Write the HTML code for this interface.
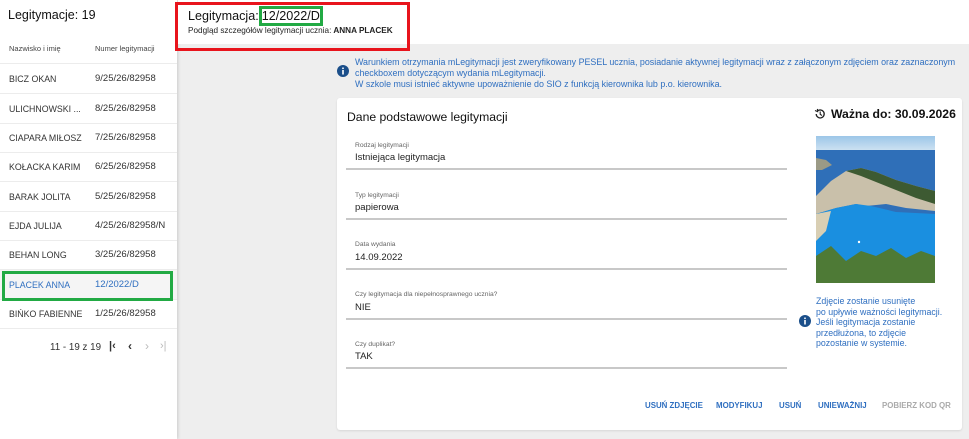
<!DOCTYPE html>
<html><head><meta charset="utf-8"><style>
*{margin:0;padding:0;box-sizing:border-box}
body{width:969px;height:439px;overflow:hidden;background:#eeeeee;font-family:"Liberation Sans",Arial,sans-serif;position:relative;color:#222}
.a{position:absolute;white-space:nowrap}
#left{position:absolute;left:0;top:0;width:177px;height:439px;background:#fff;box-shadow:1px 0 3px rgba(0,0,0,.15)}
.row{position:absolute;left:0;width:177px;height:30px;border-bottom:1px solid #ececec;font-size:8.8px;color:#333}
.row span{position:absolute;top:9px;line-height:12px}
.row span+span{font-size:9.5px}
.lbl{font-size:6.7px;color:#666}
.val{font-size:9.5px;color:#222}
.ul{position:absolute;left:346px;width:441px;height:2px;background:#c8c8c8}
.btn{position:absolute;top:401px;font-size:7.9px;font-weight:bold;color:#2f6fc0}
</style></head><body>
<div id="left">
<div class="a" style="left:8px;top:8px;font-size:12.5px;color:#111">Legitymacje: 19</div>
<div class="a" style="left:9px;top:44px;font-size:7.5px;color:#444">Nazwisko i imię</div>
<div class="a" style="left:95px;top:44px;font-size:7.5px;color:#444">Numer legitymacji</div>
<div class="row" style="top:34px;height:30px"></div>
<div class="row" style="top:64px"><span style="left:9px">BICZ OKAN</span><span style="left:95px">9/25/26/82958</span></div>
<div class="row" style="top:94px"><span style="left:9px">ULICHNOWSKI ...</span><span style="left:95px">8/25/26/82958</span></div>
<div class="row" style="top:123px"><span style="left:9px">CIAPARA MIŁOSZ</span><span style="left:95px">7/25/26/82958</span></div>
<div class="row" style="top:152px"><span style="left:9px">KOŁACKA KARIM</span><span style="left:95px">6/25/26/82958</span></div>
<div class="row" style="top:182px"><span style="left:9px">BARAK JOLITA</span><span style="left:95px">5/25/26/82958</span></div>
<div class="row" style="top:211px"><span style="left:9px">EJDA JULIJA</span><span style="left:95px">4/25/26/82958/N</span></div>
<div class="row" style="top:240px"><span style="left:9px">BEHAN LONG</span><span style="left:95px">3/25/26/82958</span></div>
<div class="row" style="top:270px;background:#f5f5f5;color:#2f6fc0"><span style="left:9px">PLACEK ANNA</span><span style="left:95px">12/2022/D</span></div>
<div class="row" style="top:299px"><span style="left:9px">BIŃKO FABIENNE</span><span style="left:95px">1/25/26/82958</span></div>
<div class="a" style="left:50px;top:342px;font-size:9.8px;color:#333">11 - 19 z 19</div>
<div class="a" style="left:109px;top:340px;font-size:11px;color:#333;font-weight:bold">|&lsaquo;</div>
<div class="a" style="left:128px;top:339px;font-size:12px;color:#333;font-weight:bold">&lsaquo;</div>
<div class="a" style="left:145px;top:339px;font-size:12px;color:#bbb">&rsaquo;</div>
<div class="a" style="left:160px;top:340px;font-size:11px;color:#bbb">&rsaquo;|</div>
</div>
<div style="position:absolute;left:2px;top:271px;width:171px;height:30px;border:3px solid #22aa44"></div>
<div style="position:absolute;left:178px;top:0;width:791px;height:44px;background:#fff"></div>
<div style="position:absolute;left:175px;top:2px;width:235px;height:49px;border:3px solid #e8141c"></div>
<div class="a" style="left:188px;top:9px;font-size:12.6px;color:#111">Legitymacja:<span style="outline:3px solid #22aa44;outline-offset:0px;margin-left:3px">12/2022/D</span></div>
<div class="a" style="left:188px;top:26px;font-size:8.2px;color:#222;font-weight:bold"><span style="font-weight:normal">Podgląd szczegółów legitymacji ucznia:</span> ANNA PLACEK</div>
<svg class="a" style="left:337px;top:65px" width="12" height="12"><circle cx="6" cy="6" r="6" fill="#1b4f8a"/><rect x="5.2" y="5" width="1.6" height="4.5" fill="#fff"/><circle cx="6" cy="3.3" r="0.9" fill="#fff"/></svg>
<div class="a" style="left:355px;top:57px;font-size:8.9px;line-height:11px;color:#2f6fc0">Warunkiem otrzymania mLegitymacji jest zweryfikowany PESEL ucznia, posiadanie aktywnej legitymacji wraz z załączonym zdjęciem oraz zaznaczonym<br>checkboxem dotyczącym wydania mLegitymacji.<br>W szkole musi istnieć aktywne upoważnienie do SIO z funkcją kierownika lub p.o. kierownika.</div>
<div style="position:absolute;left:337px;top:98px;width:625px;height:332px;background:#fff;border-radius:3px;box-shadow:0 1px 2px rgba(0,0,0,.1)"></div>
<div class="a" style="left:347px;top:110px;font-size:12.2px;color:#111">Dane podstawowe legitymacji</div>
<svg class="a" style="left:814px;top:108px" width="12" height="12" viewBox="0 0 12 12"><path d="M2.2 6A4 4 0 1 0 3.3 3.2" fill="none" stroke="#222" stroke-width="1.3"/><path d="M1 2.5 L3.6 3.6 L3.4 0.9" fill="none" stroke="#222" stroke-width="1.1"/><path d="M6.2 3.5V6.3L8 7.5" fill="none" stroke="#222" stroke-width="1.1"/></svg>
<div class="a" style="left:831px;top:107px;font-size:12.2px;font-weight:bold;color:#111">Ważna do: 30.09.2026</div>
<div class="a lbl" style="left:355px;top:142px">Rodzaj legitymacji</div>
<div class="a val" style="left:355px;top:152px">Istniejąca legitymacja</div>
<div class="ul" style="top:168px"></div>
<div class="a lbl" style="left:355px;top:192px">Typ legitymacji</div>
<div class="a val" style="left:355px;top:202px">papierowa</div>
<div class="ul" style="top:218px"></div>
<div class="a lbl" style="left:355px;top:241px">Data wydania</div>
<div class="a val" style="left:355px;top:252px">14.09.2022</div>
<div class="ul" style="top:268px"></div>
<div class="a lbl" style="left:355px;top:291px">Czy legitymacja dla niepełnosprawnego ucznia?</div>
<div class="a val" style="left:355px;top:302px">NIE</div>
<div class="ul" style="top:318px"></div>
<div class="a lbl" style="left:355px;top:341px">Czy duplikat?</div>
<div class="a val" style="left:355px;top:351px">TAK</div>
<div class="ul" style="top:367px"></div>
<svg class="a" style="left:816px;top:136px" width="119" height="147" viewBox="0 0 119 147">
<defs><linearGradient id="s" x1="0" y1="0" x2="0" y2="1"><stop offset="0" stop-color="#9cc6e8"/><stop offset="1" stop-color="#cfe3f2"/></linearGradient></defs>
<rect width="119" height="15" fill="url(#s)"/>
<rect y="14" width="119" height="133" fill="#2f6fb8"/>
<path d="M0 22 L10 24 L16 29 L6 34 L0 34Z" fill="#9b9a86"/>
<path d="M0 60 L15 45 L30 35 L45 32 L60 36 L80 44 L100 50 L119 55 L119 75 L90 72 L70 68 L50 70 L40 68 L20 72 L0 78Z" fill="#c9c0aa"/>
<path d="M30 35 L45 32 L60 36 L80 44 L100 50 L119 55 L119 68 L100 62 L85 56 L70 50 L55 44 L45 40 Z" fill="#3d5a32"/>
<path d="M0 78 L20 72 L40 68 L55 70 L80 76 L119 78 L119 147 L0 147Z" fill="#1a8fe0"/>
<path d="M0 78 L15 75 L10 95 L0 105Z" fill="#d9cfb4"/>
<path d="M0 120 L15 110 L30 125 L45 115 L60 120 L75 112 L90 122 L105 115 L119 120 L119 147 L0 147Z" fill="#4e7a36"/>
<circle cx="43" cy="106" r="1.2" fill="#fff"/>
</svg>
<svg class="a" style="left:799px;top:315px" width="12" height="12"><circle cx="6" cy="6" r="6" fill="#1b4f8a"/><rect x="5.2" y="5" width="1.6" height="4.5" fill="#fff"/><circle cx="6" cy="3.3" r="0.9" fill="#fff"/></svg>
<div class="a" style="left:816px;top:296px;font-size:8.8px;line-height:10.5px;color:#2f6fc0">Zdjęcie zostanie usunięte<br>po upływie ważności legitymacji.<br>Jeśli legitymacja zostanie<br>przedłużona, to zdjęcie<br>pozostanie w systemie.</div>
<div class="btn" style="left:645px">USUŃ ZDJĘCIE</div>
<div class="btn" style="left:716px">MODYFIKUJ</div>
<div class="btn" style="left:779px">USUŃ</div>
<div class="btn" style="left:818px">UNIEWAŻNIJ</div>
<div class="btn" style="left:882px;color:#aaa">POBIERZ KOD QR</div>
</body></html>
